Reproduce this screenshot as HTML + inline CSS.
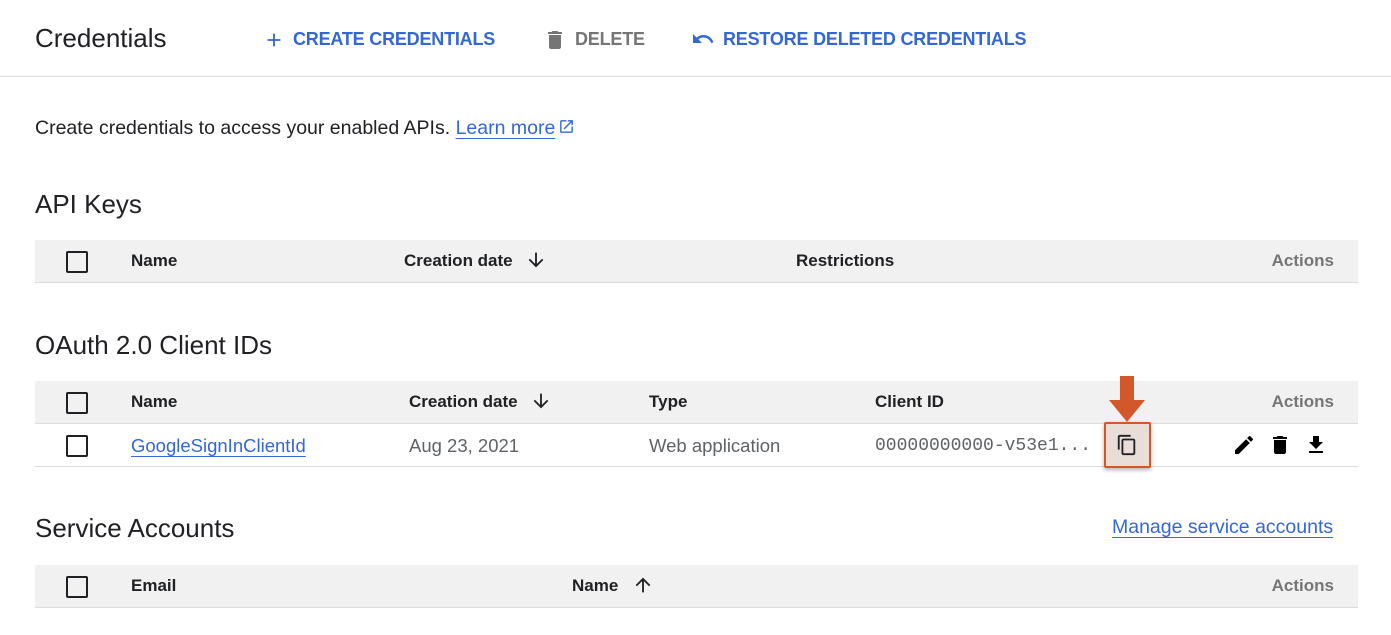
<!DOCTYPE html>
<html><head><style>
body{margin:0;width:1391px;height:635px;background:#fff;font-family:"Liberation Sans",Arial,sans-serif;color:#202124;position:relative;overflow:hidden}
.a{position:absolute;white-space:nowrap}
.hdr{position:absolute;left:0;top:0;width:1391px;height:76px;border-bottom:1px solid #dadce0}
.btn{font-size:18px;font-weight:bold;color:#3367d6;letter-spacing:-0.2px}
.h2{font-size:26px;color:#202124}
.th{position:absolute;left:35px;width:1323px;height:42px;background:#f1f1f1;border-bottom:1px solid #dadce0}
.tr{position:absolute;left:35px;width:1323px;height:42px;border-bottom:1px solid #dadce0}
.cb{position:absolute;left:31px;top:11px;width:18px;height:18px;border:2px solid #202124;border-radius:2px}
.c{position:absolute;top:11px;font-size:17px;font-weight:bold;color:#202124}
.act{position:absolute;top:11px;right:24px;font-size:17px;font-weight:bold;color:#757575}
.td{position:absolute;top:11px;font-size:18.5px;color:#5f6368}
.ar{position:absolute;top:9px}
a{color:#3367d6;text-decoration:underline;text-underline-offset:4px}
</style></head><body>
<div class="hdr">
<div class="a" style="left:35px;top:23px;font-size:26px">Credentials</div>
<svg class="a" style="left:263px;top:29px" width="22" height="22" viewBox="0 0 24 24"><path d="M19 13h-6v6h-2v-6H5v-2h6V5h2v6h6v2z" fill="#3367d6"/></svg>
<div class="a btn" style="left:293px;top:29px">CREATE CREDENTIALS</div>
<svg class="a" style="left:543px;top:28px" width="24" height="24" viewBox="0 0 24 24"><path d="M6 19c0 1.1.9 2 2 2h8c1.1 0 2-.9 2-2V7H6v12zM19 4h-3.5l-1-1h-5l-1 1H5v2h14V4z" fill="#757575"/></svg>
<div class="a btn" style="left:575px;top:29px;color:#757575">DELETE</div>
<svg class="a" style="left:690px;top:27px" width="26" height="24" viewBox="0 0 24 24"><path d="M12.5 8c-2.65 0-5.05.99-6.9 2.6L2 7v9h9l-3.62-3.62c1.39-1.16 3.16-1.88 5.12-1.88 3.54 0 6.55 2.31 7.6 5.5l2.37-.78C21.08 11.03 17.15 8 12.5 8z" fill="#3367d6"/></svg>
<div class="a btn" style="left:723px;top:29px">RESTORE DELETED CREDENTIALS</div>
</div>
<div class="a" style="left:35px;top:117px;font-size:19.5px">Create credentials to access your enabled APIs. <a>Learn more</a><svg style="vertical-align:-1px;margin-left:3px" width="17" height="17" viewBox="0 0 24 24"><path d="M19 19H5V5h7V3H5a2 2 0 0 0-2 2v14a2 2 0 0 0 2 2h14c1.1 0 2-.9 2-2v-7h-2v7zM14 3v2h3.59l-9.83 9.83 1.41 1.41L19 6.41V10h2V3h-7z" fill="#3367d6"/></svg></div>
<div class="a h2" style="left:35px;top:189px">API Keys</div>
<div class="th" style="top:240px"><div class="cb"></div><div class="c" style="left:96px">Name</div><div class="c" style="left:369px">Creation date</div><svg class="ar" style="left:490px" width="22" height="22" viewBox="0 0 24 24"><path d="M20 12l-1.41-1.41L13 16.17V4h-2v12.17l-5.58-5.59L4 12l8 8 8-8z" fill="#202124"/></svg><div class="c" style="left:761px">Restrictions</div><div class="act">Actions</div></div>
<div class="a h2" style="left:35px;top:330px">OAuth 2.0 Client IDs</div>
<div class="th" style="top:381px"><div class="cb"></div><div class="c" style="left:374px">Creation date</div><div class="c" style="left:96px">Name</div><svg class="ar" style="left:495px" width="22" height="22" viewBox="0 0 24 24"><path d="M20 12l-1.41-1.41L13 16.17V4h-2v12.17l-5.58-5.59L4 12l8 8 8-8z" fill="#202124"/></svg><div class="c" style="left:614px">Type</div><div class="c" style="left:840px">Client ID</div><div class="act">Actions</div></div>
<div class="tr" style="top:424px"><div class="cb"></div><div class="td" style="left:96px"><a>GoogleSignInClientId</a></div><div class="td" style="left:374px">Aug 23, 2021</div><div class="td" style="left:614px">Web application</div><div class="td" style="left:840px;font-family:'Liberation Mono',monospace;font-size:18px;top:12px">00000000000-v53e1...</div>
<svg class="a" style="left:1197px;top:9px" width="24" height="24" viewBox="0 0 24 24"><path d="M3 17.25V21h3.75L17.81 9.94l-3.75-3.75L3 17.25zM20.71 7.04a1 1 0 0 0 0-1.41l-2.34-2.34a1 1 0 0 0-1.41 0l-1.83 1.83 3.75 3.75 1.83-1.83z" fill="#000"/></svg>
<svg class="a" style="left:1233px;top:9px" width="24" height="24" viewBox="0 0 24 24"><path d="M6 19c0 1.1.9 2 2 2h8c1.1 0 2-.9 2-2V7H6v12zM19 4h-3.5l-1-1h-5l-1 1H5v2h14V4z" fill="#000"/></svg>
<svg class="a" style="left:1269px;top:9px" width="24" height="24" viewBox="0 0 24 24"><path d="M19 9h-4V3H9v6H5l7 7 7-7zM5 18v2h14v-2H5z" fill="#000"/></svg>
</div>
<div class="a" style="left:1104px;top:422px;width:43px;height:42px;background:#e9ddd8;border:2px solid #d2572a;border-radius:2px;box-shadow:0 2px 4px rgba(0,0,0,.3)"></div>
<svg class="a" style="left:1116px;top:434px" width="22" height="22" viewBox="0 0 24 24"><path d="M16 1H4c-1.1 0-2 .9-2 2v14h2V3h12V1zm3 4H8c-1.1 0-2 .9-2 2v14c0 1.1.9 2 2 2h11c1.1 0 2-.9 2-2V7c0-1.1-.9-2-2-2zm0 16H8V7h11v14z" fill="#202124"/></svg>
<svg class="a" style="left:1106px;top:376px" width="42" height="50" viewBox="0 0 42 50"><rect x="14" y="0" width="14" height="26" fill="#d2572a"/><path d="M3 24h36L21 46z" fill="#d2572a"/></svg>
<div class="a h2" style="left:35px;top:513px">Service Accounts</div>
<div class="a" style="left:1112px;top:516px;font-size:19.5px"><a>Manage service accounts</a></div>
<div class="th" style="top:565px"><div class="cb"></div><div class="c" style="left:96px">Email</div><div class="c" style="left:537px">Name</div><svg class="ar" style="left:597px" width="22" height="22" viewBox="0 0 24 24"><path d="M4 12l1.41 1.41L11 7.83V20h2V7.83l5.58 5.59L20 12l-8-8-8 8z" fill="#202124"/></svg><div class="act">Actions</div></div>
</body></html>
